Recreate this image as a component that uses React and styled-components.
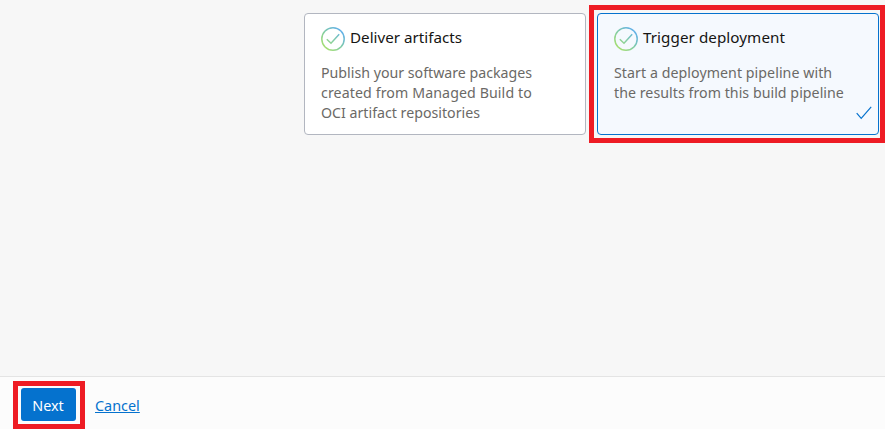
import React from 'react';
import styled, { createGlobalStyle } from 'styled-components';

const GlobalStyle = createGlobalStyle`
  * { box-sizing: border-box; }
  body {
    margin: 0;
    background: #f7f7f7;
    font-family: "Noto Sans", "Open Sans", sans-serif;
    overflow: hidden;
  }
`;

const Page = styled.div`
  display: flex;
  flex-direction: column;
  width: 885px;
  height: 429px;
  background: #f7f7f7;
`;

const Stages = styled.main`
  flex: 1;
  display: flex;
  align-items: flex-start;
  gap: 3px;
  padding: 5px 0 0 304px;
`;

const Highlight = styled.div`
  flex: none;
  border: 5px solid #ee1c24;
  padding: ${(p) => p.$padding};
`;

const Card = styled.article`
  position: relative;
  flex: none;
  width: 282px;
  height: 122px;
  margin-top: ${(p) => (p.$selected ? 0 : 8)}px;
  padding: 13px 16px;
  border: 1px solid ${(p) => (p.$selected ? '#0572ce' : '#b2b6c0')};
  border-radius: 4px;
  background: ${(p) => (p.$selected ? '#f5f9fe' : '#ffffff')};
`;

const CardHeader = styled.header`
  display: flex;
  align-items: center;
  gap: 5px;
  height: 24px;
`;

const Title = styled.h3`
  margin: -4px 0 0;
  color: #161513;
  font-size: 15.2px;
  font-weight: 400;
  line-height: 20px;
  letter-spacing: ${(p) => p.$tracking || 0}px;
  white-space: nowrap;
`;

const Description = styled.p`
  margin: 12px 0 0;
  color: #6b6966;
  font-size: 14.2px;
  line-height: 20px;
`;

const Line = styled.span`
  display: block;
  white-space: nowrap;
  letter-spacing: ${(p) => p.$tracking || 0}px;
`;

const SelectedMark = styled.svg`
  position: absolute;
  right: 6px;
  bottom: 14px;
`;

const Footer = styled.footer`
  display: flex;
  align-items: flex-start;
  gap: 10px;
  height: 53px;
  padding: 4px 0 0 13px;
  border-top: 1px solid #e4e4e4;
  background: #fcfcfc;
`;

const NextButton = styled.button`
  display: block;
  width: 55px;
  height: 33px;
  padding: 3px 1px 0 0;
  border: 0;
  border-radius: 3px;
  background: #0572ce;
  color: #ffffff;
  font: 400 14.4px/20px "Noto Sans", sans-serif;
`;

const CancelLink = styled.a`
  margin-top: 15px;
  color: #0572ce;
  font-size: 14.4px;
  line-height: 20px;
  text-decoration: underline;
  text-underline-offset: 1px;
`;

function StageIcon({ id }) {
  return (
    <svg width="24" height="24" viewBox="0 0 24 24" fill="none">
      <defs>
        <linearGradient id={id} gradientUnits="userSpaceOnUse" x1="3" y1="21" x2="20" y2="3">
          <stop offset="0" stopColor="#a8e070" />
          <stop offset="0.5" stopColor="#82cca6" />
          <stop offset="1" stopColor="#62b0ea" />
        </linearGradient>
      </defs>
      <circle cx="12" cy="12" r="11.2" stroke={`url(#${id})`} strokeWidth="1.5" />
      <path d="M5.8 12.2L10 16.2L18.2 7.2" stroke={`url(#${id})`} strokeWidth="1.5" />
    </svg>
  );
}

function StageCard({ id, title, titleTracking, lines, selected }) {
  return (
    <Card $selected={selected}>
      <CardHeader>
        <StageIcon id={id} />
        <Title $tracking={titleTracking}>{title}</Title>
      </CardHeader>
      <Description>
        {lines.map(([text, tracking]) => (
          <Line key={text} $tracking={tracking}>{text}</Line>
        ))}
      </Description>
      {selected && (
        <SelectedMark width="16" height="14" viewBox="0 0 16 14" fill="none">
          <path d="M0.7 7.2L5.2 12.3L15.2 0.8" stroke="#0572ce" strokeWidth="1.2" />
        </SelectedMark>
      )}
    </Card>
  );
}

export default function App() {
  return (
    <Page>
      <GlobalStyle />
      <Stages>
        <StageCard
          id="deliver"
          title="Deliver artifacts"
          lines={[
            ['Publish your software packages', 0],
            ['created from Managed Build to', 0.1],
            ['OCI artifact repositories', 0],
          ]}
        />
        <Highlight $padding="3px 1px 3px 3px">
          <StageCard
            id="trigger"
            selected
            title="Trigger deployment"
            titleTracking={0.07}
            lines={[
              ['Start a deployment pipeline with', 0.06],
              ['the results from this build pipeline', 0.04],
            ]}
          />
        </Highlight>
      </Stages>
      <Footer>
        <Highlight $padding="2px 4px 3px 3px">
          <NextButton type="button">Next</NextButton>
        </Highlight>
        <CancelLink href="#">Cancel</CancelLink>
      </Footer>
    </Page>
  );
}
